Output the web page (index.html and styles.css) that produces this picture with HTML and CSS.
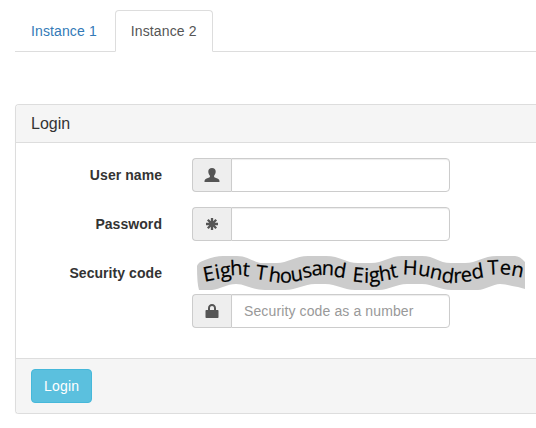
FILE: index.html
```
<!DOCTYPE html>
<html lang="en">
<head>
<meta charset="utf-8">
<title>Login</title>
<link rel="stylesheet" href="styles.css">
</head>
<body>
<ul class="tabs">
  <li><a class="tab">Instance 1</a></li>
  <li><a class="tab active">Instance 2</a></li>
</ul>
<form class="panel">
  <div class="panel-heading">Login</div>
  <div class="panel-body">
    <div class="row">
      <label for="user">User name</label>
      <div class="group">
        <span class="addon"><svg width="16" height="14" viewBox="0 0 16 14"><path d="M8 0C5.600 0 4.300 1.300 4.300 3.500c0 1.500.6 3.200 1.600 4.200v1.400c-.5.8-3.200 1.300-4.500 2.200C.7 11.800.5 12.600.5 14h15c0-1.400-.2-2.200-.9-2.700-1.300-.9-4-1.400-4.500-2.200V7.700c1-1 1.600-2.700 1.600-4.200C11.700 1.300 10.400 0 8 0z"/></svg></span>
        <input id="user" type="text">
      </div>
    </div>
    <div class="row">
      <label for="pass">Password</label>
      <div class="group">
        <span class="addon"><svg width="14" height="14" viewBox="0 0 14 14"><path d="M7 1v12M1 7h12M2.800 2.800l8.400 8.400M11.200 2.800l-8.400 8.400" fill="none" stroke="#555" stroke-width="2.300"/></svg></span>
        <input id="pass" type="password">
      </div>
    </div>
    <div class="row">
      <label for="code">Security code</label>
      <div class="code">
        <svg class="captcha" width="334" height="38" viewBox="192 256 334 38">
          <path class="wave" d="M197 266Q198 262 205 260Q215 256 223 256H237C248 256 254 263 263 263H277C287 263 296 256 308 256H326C340 256 346 263 358 263H371C383 263 390 256 402 256H422C435 256 438 263 451 263H465C477 263 483 256 497 256H515Q520 256 525 262V289L518 287C509 286 507 284 500 284C493 284 485 290 478 290H452C439 290 433 284 422 284H407C396 284 389 290 379 290H355C343 290 337 284 325 284H315C304 284 297 290 285 290H265C251 290 246 284 236 284C227 284 220 289 212 290H199Q197 284 197 266z"/>
          <g class="letters" transform="translate(.5 1.300)">
            <text transform="translate(204 280.500) rotate(-11)">E</text>
            <text transform="translate(215.500 278) rotate(-10)">i</text>
            <text transform="translate(220.500 276.500) rotate(-8)">g</text>
            <text transform="translate(230 274) rotate(-3)">h</text>
            <text transform="translate(241.500 274.500) rotate(6)">t</text>
            <text transform="translate(254.500 277.500) rotate(8)">T</text>
            <text transform="translate(267.500 280) rotate(8)">h</text>
            <text transform="translate(279.500 281.500) rotate(-1)">o</text>
            <text transform="translate(291 280.500) rotate(-8)">u</text>
            <text transform="translate(303 277) rotate(-11)">s</text>
            <text transform="translate(311.500 274.500) rotate(-5)">a</text>
            <text transform="translate(321 273.500) rotate(3)">n</text>
            <text transform="translate(332.500 275) rotate(9)">d</text>
            <text transform="translate(351.500 280) rotate(6)">E</text>
            <text transform="translate(363.500 281.500) rotate(1)">i</text>
            <text transform="translate(369 281) rotate(-5)">g</text>
            <text transform="translate(379.500 280) rotate(-9)">h</text>
            <text transform="translate(391 277) rotate(-11)">t</text>
            <text transform="translate(402 273) rotate(3)">H</text>
            <text transform="translate(417 274) rotate(8)">u</text>
            <text transform="translate(428.500 276.500) rotate(12)">n</text>
            <text transform="translate(440.500 280.500) rotate(8)">d</text>
            <text transform="translate(453 281.500) rotate(-1)">r</text>
            <text transform="translate(461 281) rotate(-7)">e</text>
            <text transform="translate(472 278) rotate(-9)">d</text>
            <text transform="translate(487.500 273.500) rotate(-3)">T</text>
            <text transform="translate(499 273) rotate(3)">e</text>
            <text transform="translate(510 274) rotate(11)">n</text>
          </g>
        </svg>
        <div class="group">
          <span class="addon"><svg width="14" height="14" viewBox="0 0 14 14"><path fill-rule="evenodd" d="M3 6V4.200C3 1.700 4.700 0 7 0s4 1.700 4 4.200V6h1.800q.7 0 .7.700v6.600q0 .7-.7.700H1.200q-.7 0-.7-.7V6.700Q.5 6 1.200 6zM5 6h4V4.200C9 2.900 8.200 2 7 2s-2 .9-2 2.200z"/></svg></span>
          <input id="code" type="text" placeholder="Security code as a number">
        </div>
      </div>
    </div>
  </div>
  <div class="panel-footer"><button type="button">Login</button></div>
</form>
</body>
</html>
```
FILE: styles.css
```
* { box-sizing: border-box; }
body {
  margin: 0;
  padding: 10px 0 0 15px;
  background: #fff;
  color: #333;
  font: 14px/20px "Liberation Sans", Arial, sans-serif;
  letter-spacing: .12px;
}
.tabs {
  display: flex;
  margin: 0 0 52px;
  padding: 0;
  height: 42px;
  list-style: none;
  border-bottom: 1px solid #ddd;
}
.tab {
  display: block;
  height: 42px;
  margin-right: 2px;
  padding: 10px 15px;
  border: 1px solid transparent;
  border-radius: 4px 4px 0 0;
  color: #337ab7;
}
.tab.active {
  color: #555;
  background: #fff;
  border-color: #ddd #ddd #fff;
}
.panel {
  border: 1px solid #ddd;
  border-right: 0;
  border-radius: 4px 0 0 4px;
  box-shadow: 0 1px 1px rgba(0, 0, 0, .05);
}
.panel-heading {
  height: 38px;
  padding: 9px 15px;
  background: #f5f5f5;
  border-bottom: 1px solid #ddd;
  border-radius: 3px 0 0 0;
  font-size: 16px;
  letter-spacing: 0;
}
.panel-body { padding: 15px 0; }
.row {
  display: flex;
  gap: 30px;
  margin-bottom: 15px;
}
label {
  width: 146px;
  padding-top: 7px;
  text-align: right;
  font-weight: bold;
  letter-spacing: .06px;
}
.group {
  display: flex;
  width: 258px;
  height: 34px;
}
.addon {
  display: flex;
  align-items: center;
  justify-content: center;
  width: 39px;
  border: 1px solid #ccc;
  border-right: 0;
  border-radius: 4px 0 0 4px;
  background: #eee;
  fill: #555;
}
input {
  flex: 1;
  min-width: 0;
  height: 34px;
  padding: 6px 12px;
  border: 1px solid #ccc;
  border-radius: 0 4px 4px 0;
  box-shadow: inset 0 1px 1px rgba(0, 0, 0, .075);
  background: #fff;
  font: inherit;
  letter-spacing: inherit;
}
input::placeholder { color: #999; opacity: 1; }
.captcha {
  display: block;
  overflow: visible;
}
.wave { fill: #ccc; }
.letters {
  fill: #000;
  stroke: #000;
  stroke-width: .25px;
  font: 20px "Open Sans", "Noto Sans", sans-serif;
  letter-spacing: 0;
}
.panel-footer {
  height: 55px;
  padding: 10px 15px;
  border-top: 1px solid #ddd;
  border-radius: 0 0 0 3px;
  background: #f5f5f5;
}
button {
  display: block;
  height: 34px;
  padding: 6px 12px;
  border: 1px solid #46b8da;
  border-radius: 4px;
  background: #5bc0de;
  color: #fff;
  font: inherit;
  letter-spacing: .18px;
}
```
